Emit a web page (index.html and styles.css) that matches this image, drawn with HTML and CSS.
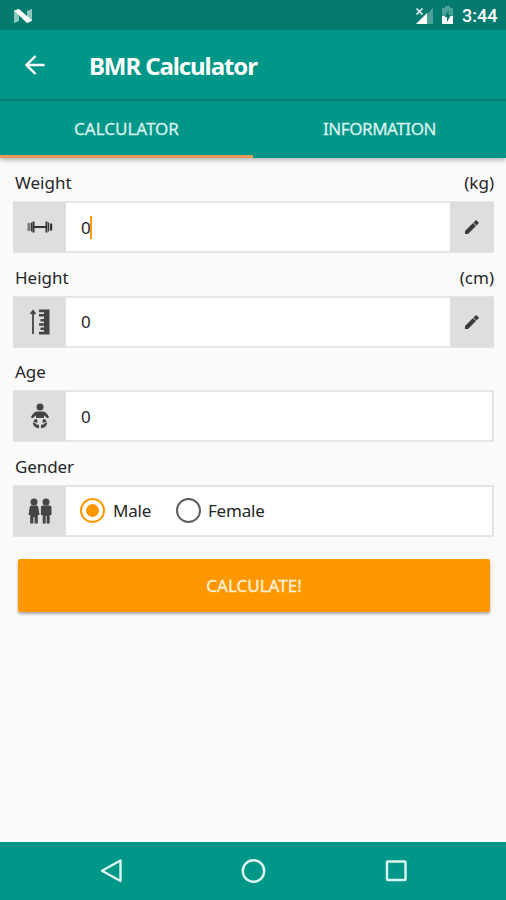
FILE: index.html
```html
<!DOCTYPE html>
<html lang="en">
<head>
<meta charset="utf-8">
<title>BMR Calculator</title>
<link rel="stylesheet" href="styles.css">
</head>
<body>
<div class="status">
  <svg class="n-logo" width="20" height="16" viewBox="0 0 20 16"><path fill="#8fc7bf" d="M1 3l5-2v12l-5 2zM14 3l5-2v12l-5 2z"/><path fill="#fff" d="M1 2.500L6 1l13 11.500L14 15z"/></svg>
  <svg class="signal" width="19" height="19" viewBox="0 0 19 19"><path fill="#4da297" d="M18 2v16H12V8z"/><path fill="#fff" d="M12 7v11H1z"/><path stroke="#e5f3f1" stroke-width="1.7" d="M1.500 2.500l6 6M7.500 2.500l-6 6"/></svg>
  <svg class="battery" width="13" height="19" viewBox="0 0 13 19"><path fill="#4da297" d="M4 0h5v2h3v9H1V2h3z"/><path fill="#fff" d="M1 10h11v8H1z"/><path fill="#047b6e" d="M7.500 4L3.500 11h2.500v5l4-7H7.500z"/></svg>
  <span class="clock">3:44</span>
</div>
<header class="appbar">
  <svg class="back" width="20" height="20" viewBox="0 0 20 20"><path fill="none" stroke="#fff" stroke-width="2.400" d="M19.500 10H2M10.500 1L1.500 10l9 9"/></svg>
  <h1 class="title">BMR Calculator</h1>
</header>
<nav class="tabs">
  <div class="tab active"><span class="tab-calc">CALCULATOR</span></div>
  <div class="tab"><span class="tab-info">INFORMATION</span></div>
</nav>
<main class="form">
  <section class="group">
    <div class="label"><span class="weight">Weight</span><span class="unit">(kg)</span></div>
    <div class="field">
      <div class="icon"><svg width="26" height="14" viewBox="0 0 26 14"><path fill="#777" d="M.5 3h3v8h-3z"/><path fill="#333" d="M4 2.500h1.200v9H4zM5.500 1.500h2v11h-2zM7 6h12v2H7zM18.500 1.500h2v11h-2zM21 2.500h1.200v9H21zM23 3.500h2.200v7H23z"/></svg></div>
      <div class="value">0<i class="caret"></i></div>
      <div class="edit"><svg width="16" height="16" viewBox="0 0 16 16"><path fill="#3b3b3b" d="M1 12v3h3l8-8-3-3zM9.500 3.500l3 3 2-2q.6-.6 0-1.200L12.700 1.500q-.6-.6-1.200 0z"/></svg></div>
    </div>
  </section>
  <section class="group">
    <div class="label"><span class="height">Height</span><span class="unit">(cm)</span></div>
    <div class="field">
      <div class="icon"><svg width="20" height="26" viewBox="0 0 20 26"><path fill="none" stroke="#444" stroke-width="1.800" d="M3 25V2M.5 5L3 2l2.500 3"/><path fill="#444" d="M9 .5h10.500v25H9v-2.800h5v-1.700h-3.500v-2.500H14v-1.700H9v-2.500h5v-1.700h-3.500v-2.500H14V7.400H9V5h5V3.300H9z"/></svg></div>
      <div class="value">0</div>
      <div class="edit"><svg width="16" height="16" viewBox="0 0 16 16"><path fill="#3b3b3b" d="M1 12v3h3l8-8-3-3zM9.500 3.500l3 3 2-2q.6-.6 0-1.200L12.700 1.500q-.6-.6-1.200 0z"/></svg></div>
    </div>
  </section>
  <section class="group">
    <div class="label"><span class="age">Age</span></div>
    <div class="field">
      <div class="icon"><svg width="18" height="26" viewBox="0 0 18 26"><circle cx="9" cy="4" r="3.500" fill="#444"/><path fill="#444" d="M5.500 8.500h7q2 0 5 4.500.8 1.500-.3 2-1 .5-2-.8L13 12.500V15H5v-2.500l-2.200 1.700q-1 1.300-2 .8-1.100-.5-.3-2 3-4.500 5-4.500z"/><path fill="none" stroke="#444" stroke-width="3.400" stroke-linejoin="round" d="M6 17q-4 2.500-1.500 5 1.500 1.500 3.500 1.500M12 17q4 2.500 1.500 5-1.500 1.500-3.500 1.500"/><path fill="none" stroke="#dedede" stroke-width="1" d="M9 19v7M2 18.500l4.500 3M16 18.500l-4.500 3"/></svg></div>
      <div class="value">0</div>
    </div>
  </section>
  <section class="group">
    <div class="label"><span class="gender">Gender</span></div>
    <div class="field">
      <div class="icon"><svg width="24" height="26" viewBox="0 0 24 26"><g fill="#444"><circle cx="6" cy="4" r="3.500"/><circle cx="18" cy="4" r="3.500"/><path d="M3.500 7.500h5q1.500 0 1.800 1.500L11.500 17h-1.700v8.500H6.600V19H5.400v6.500H2.200V17H.5L1.700 9q.3-1.500 1.800-1.500zM15 7.500h6.500q2 0 2 2V17h-1.800v8.500h-3V18h-1v7.500h-3V17h-1.800V9.500q0-2 2-2z"/></g></svg></div>
      <div class="choices">
        <span class="radio on"></span><span class="male">Male</span>
        <span class="radio"></span><span class="female">Female</span>
      </div>
    </div>
  </section>
  <div class="calculate"><span class="calc-text">CALCULATE!</span></div>
</main>
<footer class="navbar">
  <svg width="24" height="26" viewBox="0 0 24 26"><path fill="none" stroke="#dcf6f1" stroke-width="2.400" stroke-linejoin="round" d="M20.500 2.500v20.500L2 12.700z"/></svg>
  <svg width="26" height="26" viewBox="0 0 26 26"><circle cx="12.500" cy="13" r="10.700" fill="none" stroke="#dcf6f1" stroke-width="2.400"/></svg>
  <svg width="24" height="26" viewBox="0 0 24 26"><rect x="3" y="3.500" width="18.500" height="18.500" rx=".8" fill="none" stroke="#dcf6f1" stroke-width="2.400"/></svg>
</footer>
</body>
</html>
```
FILE: styles.css
```css
* { box-sizing: border-box; }
body {
  margin: 0;
  width: 506px;
  height: 900px;
  overflow: hidden;
  display: flex;
  flex-direction: column;
  background: #fafafa;
  color: #262626;
  font-family: "Noto Sans", sans-serif;
  font-size: 17px;
}
svg { display: block; flex: none; }
span { white-space: nowrap; }
.status {
  height: 30px;
  flex: none;
  display: flex;
  align-items: center;
  padding: 2px 9px 0 13px;
  background: #047b6e;
}
.signal { margin: -2px 0 0 auto; }
.battery { margin: -2px 8px 0 7px; }
.clock {
  font: 500 18px/20px Roboto, sans-serif;
  color: #fff;
  width: 35px;
}
.appbar {
  height: 71px;
  flex: none;
  display: flex;
  align-items: center;
  padding-left: 25px;
  background: #009688;
  border-bottom: 2px solid #008477;
}
.title {
  margin: 2px 0 0 44px;
  font-size: 24px;
  line-height: 32px;
  letter-spacing: -1.1px;
  color: #fff;
}
.tabs {
  height: 57px;
  flex: none;
  display: flex;
  background: #009688;
  box-shadow: 0 2px 5px rgba(0, 0, 0, .3);
}
.tab {
  flex: 1;
  display: flex;
  align-items: center;
  justify-content: center;
  border-bottom: 3px solid transparent;
  color: #d9f0ed;
  -webkit-text-stroke: .3px currentColor;
}
.tab.active { border-color: #e69a58; }
.tab-info { letter-spacing: -.45px; }
.form { flex: 1; padding: 0 12px 0 13px; }
.group { height: 94.67px; }
.label {
  height: 43px;
  display: flex;
  justify-content: space-between;
  padding: 13px 0 0 2px;
  line-height: 24px;
}
.gender { letter-spacing: -.1px; }
.field {
  height: 52px;
  display: flex;
  background: #fff;
  border: 2px solid #e5e5e5;
}
.icon, .edit {
  display: flex;
  align-items: center;
  justify-content: center;
  background: #dedede;
}
.icon { width: 53px; margin: -1px 0 -1px -2px; }
.edit { width: 44px; margin: -1px -2px -1px 0; }
.value {
  flex: 1;
  display: flex;
  align-items: center;
  padding-left: 15px;
}
.caret { width: 2px; height: 23px; margin-left: -1px; background: #ff9800; }
.choices { display: flex; align-items: center; padding-left: 14px; }
.radio {
  width: 25px;
  height: 25px;
  border: 2px solid #5c5c5c;
  border-radius: 50%;
  display: flex;
}
.radio.on { border-color: #ff9800; }
.radio.on::after {
  content: "";
  width: 13px;
  height: 13px;
  margin: auto;
  border-radius: 50%;
  background: #ff9800;
}
.male { margin-left: 8px; width: 63px; letter-spacing: -.2px; }
.female { margin-left: 7px; letter-spacing: -.2px; }
.calculate {
  height: 53px;
  margin: 22px 4px 0 5px;
  display: flex;
  align-items: center;
  justify-content: center;
  border-radius: 2px;
  background: #ff9800;
  color: #fff1db;
  -webkit-text-stroke: .3px currentColor;
  box-shadow: 0 2px 3px rgba(0, 0, 0, .32);
}
.navbar {
  height: 58px;
  flex: none;
  display: flex;
  align-items: center;
  justify-content: space-between;
  padding: 0 98px 0 100px;
  background: #009688;
}
```
